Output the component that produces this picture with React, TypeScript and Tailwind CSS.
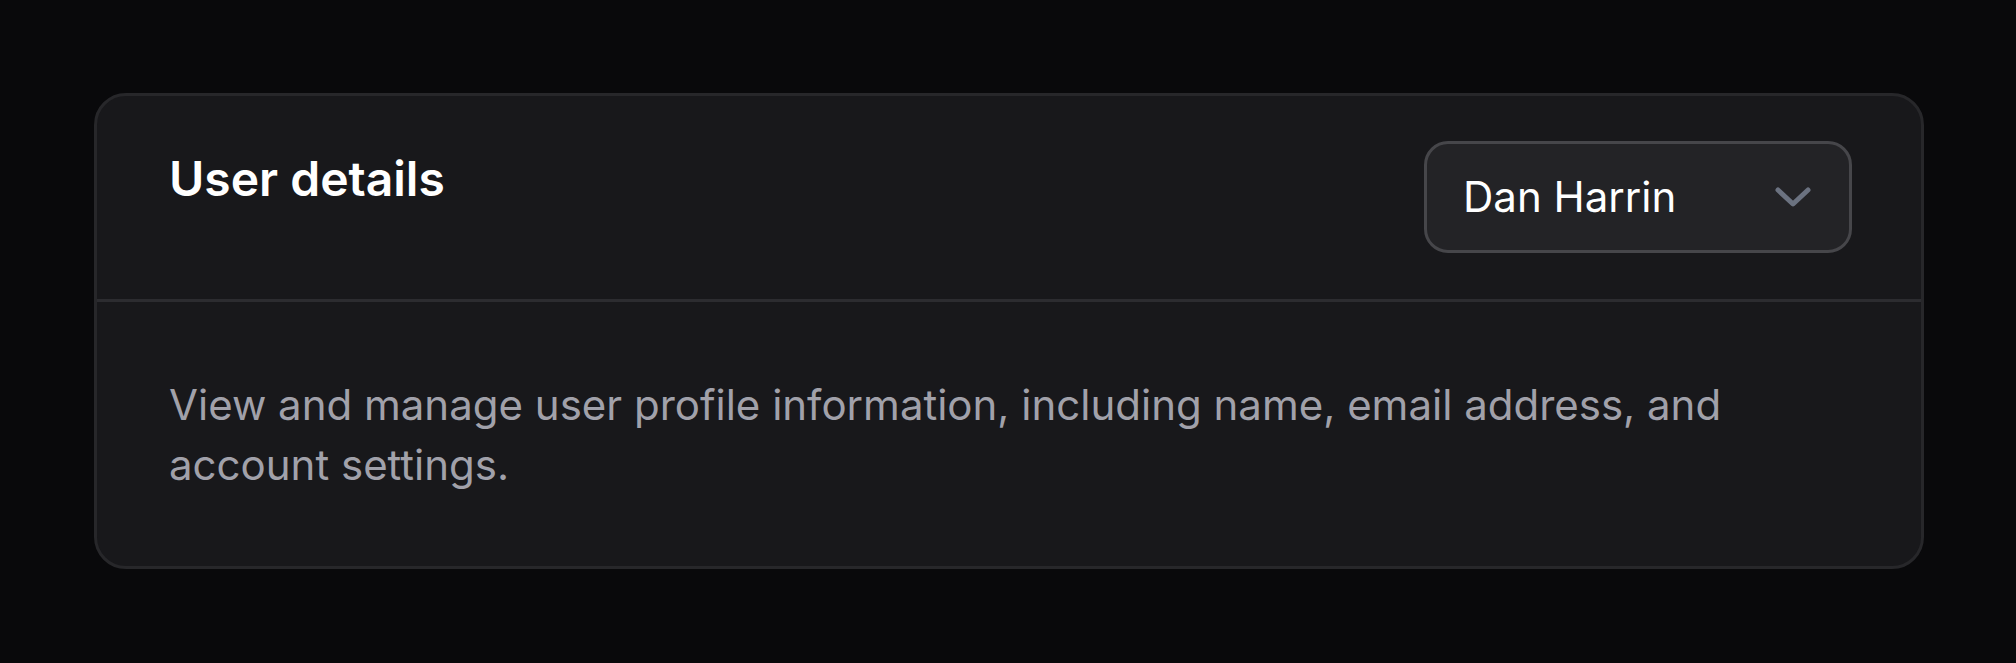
export default function App() {
  return (
    <div className="min-h-screen w-full bg-[#09090b] pt-[93px] pl-[94px] pr-[92px] font-['Inter','Liberation_Sans',sans-serif]">
      {/* section card */}
      <div className="w-[1830px] rounded-[32px] border-[3px] border-[#27272a] bg-[#18181b]">
        {/* header */}
        <div className="flex items-start justify-between pl-[72px] pr-[69px] pt-[45px] pb-[46px]">
          <h2 className="pt-[2px] text-[48px] font-semibold leading-[72px] text-white">
            User details
          </h2>
          <button className="flex h-[112px] w-[428px] items-center justify-between rounded-[24px] border-[3px] border-[#46464a] bg-[#232326] pl-[36px] pr-[38px]">
            <span className="text-[42px] leading-[60px] text-white">Dan Harrin</span>
            <svg width="36" height="20" viewBox="0 0 36 20" fill="none">
              <path
                d="M3 3 L18 17 L33 3"
                stroke="#6b7280"
                strokeWidth="5"
                strokeLinecap="round"
                strokeLinejoin="round"
              />
            </svg>
          </button>
        </div>
        <div className="h-[3px] bg-[#2c2c30]" />
        {/* body */}
        <div className="px-[72px] pt-[73px] pb-[71px]">
          <p className="text-[42px] leading-[60px] text-[#a1a1aa]">
            View and manage user profile information, including name, email address, and account settings.
          </p>
        </div>
      </div>
    </div>
  );
}
